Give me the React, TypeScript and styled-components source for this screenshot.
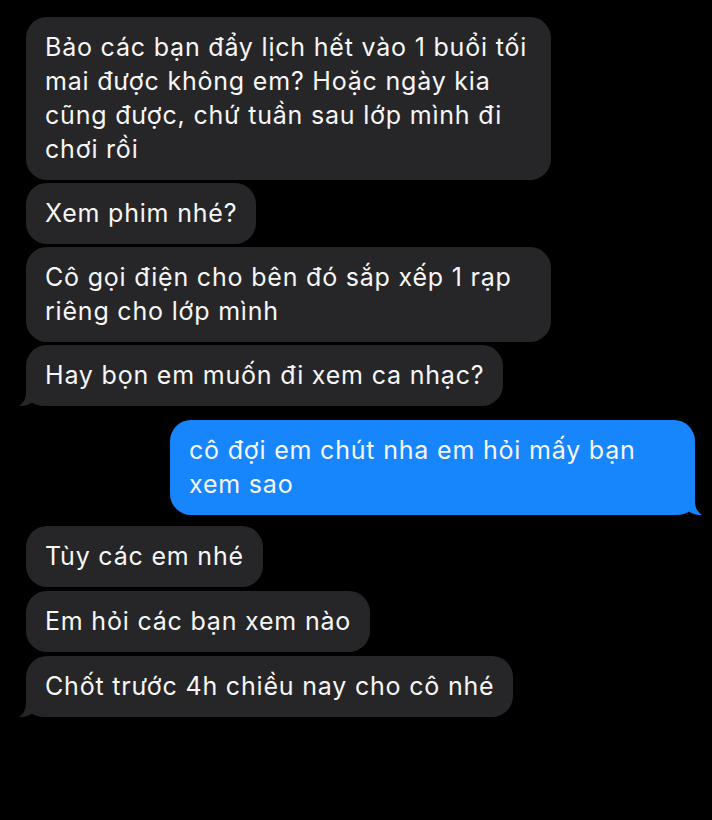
import React from "react";
import styled, { createGlobalStyle } from "styled-components";

const Global = createGlobalStyle`
  html, body { margin: 0; padding: 0; background: #000; }
  body { font-family: Inter, "Noto Sans", "Liberation Sans", sans-serif; -webkit-font-smoothing: antialiased; }
`;

const Screen = styled.div`
  width: 712px;
  height: 820px;
  background: #000;
  box-sizing: border-box;
  padding: 17px 17px 0 26px;
  display: flex;
  flex-direction: column;
`;

const Row = styled.div<{ $mine?: boolean; $gap: number }>`
  display: flex;
  justify-content: ${(p) => (p.$mine ? "flex-end" : "flex-start")};
  margin-top: ${(p) => p.$gap}px;
`;

const Bubble = styled.div<{ $mine?: boolean; $full?: boolean }>`
  position: relative;
  box-sizing: border-box;
  width: ${(p) => (p.$full ? "525px" : "auto")};
  padding: 13px 19px 14px 19px;
  border-radius: 21px;
  background: ${(p) => (p.$mine ? "#1786fc" : "#262628")};
  color: #f6f6f6;
  font-size: 25px;
  line-height: 34px;
  letter-spacing: 0.8px;
  white-space: nowrap;
`;

const TailSvg = styled.svg<{ $mine?: boolean }>`
  position: absolute;
  bottom: 0;
  ${(p) => (p.$mine ? "right: -7px; transform: scaleX(-1);" : "left: -7px;")}
  width: 26px;
  height: 22px;
  display: block;
`;

const Tail = ({ mine }: { mine?: boolean }) => (
  <TailSvg $mine={mine} viewBox="0 0 26 22">
    <path
      d="M7,0 L7,9 C7,15 4,19.5 0,22 C5,22.4 10,21 13,18.6 C16,21 20,22 26,22 L26,0 Z"
      fill={mine ? "#1786fc" : "#262628"}
    />
  </TailSvg>
);

type Msg = { lines: string[]; mine?: boolean; tail?: boolean; gap: number };

const messages: Msg[] = [
  {
    lines: [
      "Bảo các bạn đẩy lịch hết vào 1 buổi tối",
      "mai được không em? Hoặc ngày kia",
      "cũng được, chứ tuần sau lớp mình đi",
      "chơi rồi",
    ],
    gap: 0,
  },
  { lines: ["Xem phim nhé?"], gap: 3 },
  { lines: ["Cô gọi điện cho bên đó sắp xếp 1 rạp", "riêng cho lớp mình"], gap: 3 },
  { lines: ["Hay bọn em muốn đi xem ca nhạc?"], gap: 3, tail: true },
  { lines: ["cô đợi em chút nha em hỏi mấy bạn", "xem sao"], gap: 14, mine: true, tail: true },
  { lines: ["Tùy các em nhé"], gap: 11 },
  { lines: ["Em hỏi các bạn xem nào"], gap: 4 },
  { lines: ["Chốt trước 4h chiều nay cho cô nhé"], gap: 4, tail: true },
];

export default function App() {
  return (
    <>
      <Global />
      <Screen>
        {messages.map((m, i) => (
          <Row key={i} $mine={m.mine} $gap={m.gap}>
            <Bubble $mine={m.mine} $full={m.lines.length > 1}>
              {m.lines.map((l, j) => (
                <React.Fragment key={j}>
                  {j > 0 && <br />}
                  {l}
                </React.Fragment>
              ))}
              {m.tail && <Tail mine={m.mine} />}
            </Bubble>
          </Row>
        ))}
      </Screen>
    </>
  );
}
